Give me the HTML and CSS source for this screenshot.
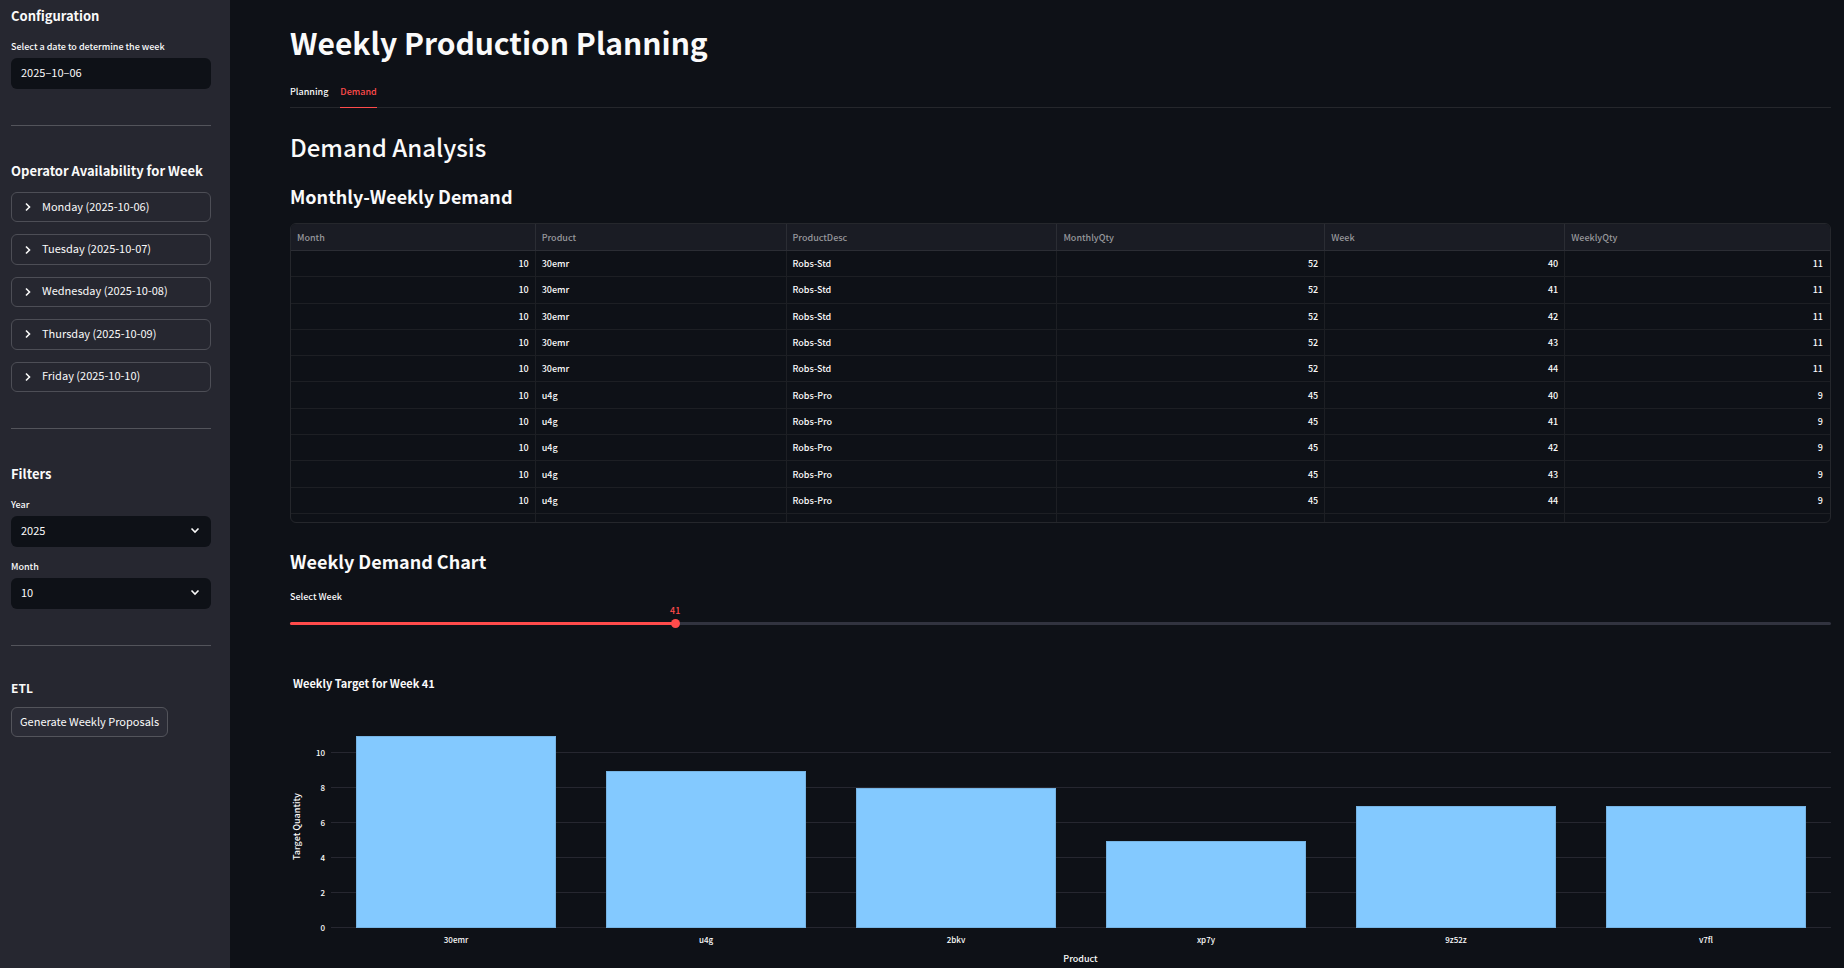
FILE: index.html
```html
<!DOCTYPE html>
<html lang="en">
<head>
<meta charset="utf-8">
<title>Weekly Production Planning</title>
<link rel="stylesheet" href="styles.css">
</head>
<body>
<div class="app">
  <aside class="sidebar">
    <section class="group">
      <h2 class="side-title">Configuration</h2>
      <label class="label" for="date">Select a date to determine the week</label>
      <input class="field" id="date" type="text" value="2025–10–06">
    </section>
    <hr class="rule">
    <section class="group">
      <h2 class="side-title side-title-tight">Operator Availability for Week</h2>
      <div class="days">
        <button class="day" type="button"><svg class="chevron" viewBox="0 0 12 12"><path d="M4 2.5 7.5 6 4 9.5"/></svg>Monday (2025-10-06)</button>
        <button class="day" type="button"><svg class="chevron" viewBox="0 0 12 12"><path d="M4 2.5 7.5 6 4 9.5"/></svg>Tuesday (2025-10-07)</button>
        <button class="day" type="button"><svg class="chevron" viewBox="0 0 12 12"><path d="M4 2.5 7.5 6 4 9.5"/></svg>Wednesday (2025-10-08)</button>
        <button class="day" type="button"><svg class="chevron" viewBox="0 0 12 12"><path d="M4 2.5 7.5 6 4 9.5"/></svg>Thursday (2025-10-09)</button>
        <button class="day" type="button"><svg class="chevron" viewBox="0 0 12 12"><path d="M4 2.5 7.5 6 4 9.5"/></svg>Friday (2025-10-10)</button>
      </div>
    </section>
    <hr class="rule">
    <section class="group">
      <h2 class="side-title">Filters</h2>
      <label class="label" for="year">Year</label>
      <div class="picker">
        <select class="field" id="year"><option>2025</option></select>
        <svg class="chevron picker-icon" viewBox="0 0 12 12"><path d="M2.5 4.5 6 8 9.5 4.5"/></svg>
      </div>
      <label class="label label-next" for="month">Month</label>
      <div class="picker">
        <select class="field" id="month"><option>10</option></select>
        <svg class="chevron picker-icon" viewBox="0 0 12 12"><path d="M2.5 4.5 6 8 9.5 4.5"/></svg>
      </div>
    </section>
    <hr class="rule">
    <section class="group">
      <h2 class="side-title side-title-small">ETL</h2>
      <button class="action" type="button">Generate Weekly Proposals</button>
    </section>
  </aside>

  <main class="main">
    <h1 class="title">Weekly Production Planning</h1>
    <div class="tabs" role="tablist">
      <button class="tab" type="button" role="tab">Planning</button>
      <button class="tab tab-active" type="button" role="tab" aria-selected="true">Demand</button>
    </div>
    <h2 class="heading">Demand Analysis</h2>
    <h3 class="subheading">Monthly-Weekly Demand</h3>
    <div class="frame">
      <table class="grid">
        <colgroup><col class="c1"><col class="c2"><col class="c3"><col class="c4"><col class="c5"><col class="c6"></colgroup>
        <thead><tr><th>Month</th><th>Product</th><th>ProductDesc</th><th>MonthlyQty</th><th>Week</th><th>WeeklyQty</th></tr></thead>
        <tbody>
          <tr><td class="num">10</td><td>30emr</td><td>Robs-Std</td><td class="num">52</td><td class="num">40</td><td class="num">11</td></tr>
          <tr><td class="num">10</td><td>30emr</td><td>Robs-Std</td><td class="num">52</td><td class="num">41</td><td class="num">11</td></tr>
          <tr><td class="num">10</td><td>30emr</td><td>Robs-Std</td><td class="num">52</td><td class="num">42</td><td class="num">11</td></tr>
          <tr><td class="num">10</td><td>30emr</td><td>Robs-Std</td><td class="num">52</td><td class="num">43</td><td class="num">11</td></tr>
          <tr><td class="num">10</td><td>30emr</td><td>Robs-Std</td><td class="num">52</td><td class="num">44</td><td class="num">11</td></tr>
          <tr><td class="num">10</td><td>u4g</td><td>Robs-Pro</td><td class="num">45</td><td class="num">40</td><td class="num">9</td></tr>
          <tr><td class="num">10</td><td>u4g</td><td>Robs-Pro</td><td class="num">45</td><td class="num">41</td><td class="num">9</td></tr>
          <tr><td class="num">10</td><td>u4g</td><td>Robs-Pro</td><td class="num">45</td><td class="num">42</td><td class="num">9</td></tr>
          <tr><td class="num">10</td><td>u4g</td><td>Robs-Pro</td><td class="num">45</td><td class="num">43</td><td class="num">9</td></tr>
          <tr><td class="num">10</td><td>u4g</td><td>Robs-Pro</td><td class="num">45</td><td class="num">44</td><td class="num">9</td></tr>
        </tbody>
        <tfoot><tr><td></td><td></td><td></td><td></td><td></td><td></td></tr></tfoot>
      </table>
    </div>
    <h3 class="subheading subheading-chart">Weekly Demand Chart</h3>
    <label class="label" for="week">Select Week</label>
    <div class="slider">
      <output class="slider-value" for="week" style="left:25%">41</output>
      <div class="slider-track"><div class="slider-fill" style="width:25%"></div></div>
      <input class="slider-input" id="week" type="range" min="40" max="44" value="41">
    </div>
    <figure class="chart">
      <figcaption class="chart-title">Weekly Target for Week 41</figcaption>
      <div class="chart-body">
        <div class="y-title"><span>Target Quantity</span></div>
        <div class="y-ticks"><span>10</span><span>8</span><span>6</span><span>4</span><span>2</span><span>0</span></div>
        <div class="plot">
          <div class="bars">
            <div class="slot"><div class="bar" style="height:91.67%"></div></div>
            <div class="slot"><div class="bar" style="height:75%"></div></div>
            <div class="slot"><div class="bar" style="height:66.67%"></div></div>
            <div class="slot"><div class="bar" style="height:41.67%"></div></div>
            <div class="slot"><div class="bar" style="height:58.33%"></div></div>
            <div class="slot"><div class="bar" style="height:58.33%"></div></div>
          </div>
        </div>
        <div class="x-ticks"><span>30emr</span><span>u4g</span><span>2bkv</span><span>xp7y</span><span>9z52z</span><span>v7fl</span></div>
      </div>
      <div class="x-title">Product</div>
    </figure>
  </main>
</div>
</body>
</html>
```

FILE: styles.css
```css
:root {
  --bg: #0e1117;
  --panel: #262730;
  --text: #fafafa;
  --accent: #ff4b4b;
  --line: #25272c;
  --bar: #83c9ff;
}

* { box-sizing: border-box; }

body {
  margin: 0;
  background: var(--bg);
  color: var(--text);
  font-family: "Noto Sans CJK SC", "Source Sans Pro", sans-serif;
  font-size: 11px;
  line-height: 16px;
}

button, input, select { font: inherit; color: inherit; margin: 0; }
h1, h2, h3 { margin: 0; font-weight: 600; }

.app { display: flex; min-height: 100vh; }

/* Sidebar */
.sidebar { width: 230px; flex: none; padding: 6px 19px 0 11px; background: var(--panel); }
.group { display: flex; flex-direction: column; align-items: stretch; }
.rule { width: 100%; height: 1px; margin: 36px 0 35px; border: 0; background: #53545b; }
.side-title { font-size: 13px; line-height: 20px; margin-bottom: 13px; white-space: nowrap; }
.side-title-tight { margin-bottom: 11px; }
.side-title-small { font-size: 12px; line-height: 13px; margin-bottom: 13px; }
.label { display: block; font-size: 9px; font-weight: 500; line-height: 16px; margin-bottom: 3px; }
.label-next { margin-top: 12px; }
.field {
  width: 100%; height: 31px; padding: 0 10px 3px; border: 0; border-radius: 6px;
  background: var(--bg); appearance: none; outline: 0;
}
.days { display: grid; gap: 12px; height: 200px; }
.day {
  display: flex; align-items: center; gap: 8px; padding: 0 10px 3px;
  border: 1px solid #4d4e56; border-radius: 6px; background: none; text-align: left;
}
.chevron { width: 12px; height: 12px; fill: none; stroke: var(--text); stroke-width: 1.6; }
.day .chevron { margin-top: 3px; }
.picker { position: relative; }
.picker-icon { position: absolute; right: 10px; top: 8px; pointer-events: none; }
.action {
  align-self: flex-start; height: 30px; padding: 0 8px 2px;
  border: 1px solid #53545b; border-radius: 6px; background: #2b2c36;
}

/* Main */
.main { flex: 1; min-width: 0; padding: 20px 13px 0 60px; }
.title { font-size: 30px; font-weight: 700; line-height: 44px; }
.tabs { display: flex; gap: 12px; margin-top: 13px; border-bottom: 1px solid var(--line); }
.tab {
  padding: 0 0 1px; height: 31px; margin-bottom: -1px; border: 0; border-bottom: 1px solid transparent;
  background: none; font-size: 9px; font-weight: 500;
}
.tab-active { color: var(--accent); border-bottom-color: var(--accent); }
.heading { font-size: 24px; font-weight: 500; line-height: 36px; margin-top: 21px; }
.subheading { font-size: 18px; line-height: 28px; margin-top: 17px; }

.frame { margin-top: 13px; border: 1px solid var(--line); border-radius: 6px; overflow: hidden; }
.grid { width: 100%; height: 298px; table-layout: fixed; border-collapse: separate; border-spacing: 0; font-size: 9px; }
.grid th, .grid td {
  padding: 1px 6px 0; line-height: 16px; text-align: left; font-weight: 500;
  border-right: 1px solid #1d1f24; border-bottom: 1px solid #1d1f24;
}
.grid th { height: 27px; background: #1a1c24; color: #96979b; border-color: #2b2d34; }
.grid td { height: 26px; }
.grid tfoot td { height: 8px; padding: 0; border-bottom: 0; }
.grid .num { text-align: right; }
.grid th:last-child, .grid td:last-child { border-right: 0; padding-right: 7px; }
.c1 { width: 15.9%; } .c2 { width: 16.3%; } .c3 { width: 17.6%; }
.c4 { width: 17.4%; } .c5 { width: 15.6%; } .c6 { width: 17.2%; }

.subheading-chart { margin-top: 24px; margin-bottom: 14px; }

/* Slider */
.slider { position: relative; padding-top: 6px; height: 20px; }
.main > .label { margin-bottom: 11px; }
.slider-track { height: 3px; border-radius: 2px; background: #31333f; }
.slider-fill { height: 3px; border-radius: 2px; background: var(--accent); }
.slider-value { position: absolute; top: -13px; transform: translateX(-50%); color: var(--accent); font-size: 9px; font-weight: 500; }
.slider-input {
  position: absolute; left: -4px; right: -4px; top: 3px; width: calc(100% + 8px); height: 9px;
  appearance: none; background: none;
}
.slider-input::-webkit-slider-thumb {
  appearance: none; width: 9px; height: 9px; border-radius: 50%; background: var(--accent);
}

/* Chart */
.chart { margin: 39px 0 0; }
.chart-title { padding-left: 3px; font-size: 11px; font-weight: 700; }
.chart-body { display: grid; grid-template-columns: 16px 25px 1fr; grid-template-rows: 210px 24px; margin-top: 27px; }
.y-title { display: flex; align-items: center; justify-content: center; padding-top: 6px; padding-right: 2px; font-size: 9px; font-weight: 500; }
.y-title span { writing-mode: vertical-rl; transform: rotate(180deg); white-space: nowrap; }
.y-ticks, .x-ticks { font-size: 8px; font-weight: 500; }
.y-ticks { display: flex; flex-direction: column; justify-content: space-between; padding: 27px 6px 0 0; margin-bottom: -8px; text-align: right; }
.plot { background: repeating-linear-gradient(to top, #262730 0 1px, transparent 1px 35px); }
.bars, .x-ticks { display: grid; grid-template-columns: repeat(6, 1fr); }
.bars { height: 100%; }
.slot { display: flex; align-items: flex-end; justify-content: center; }
.bar { width: 80%; background: var(--bar); border: 1px solid #76b4e4; }
.x-ticks { grid-column: 3; padding-top: 4px; text-align: center; }
.x-title { padding-left: 40px; text-align: center; font-size: 9px; font-weight: 500; line-height: 14px; }
```
